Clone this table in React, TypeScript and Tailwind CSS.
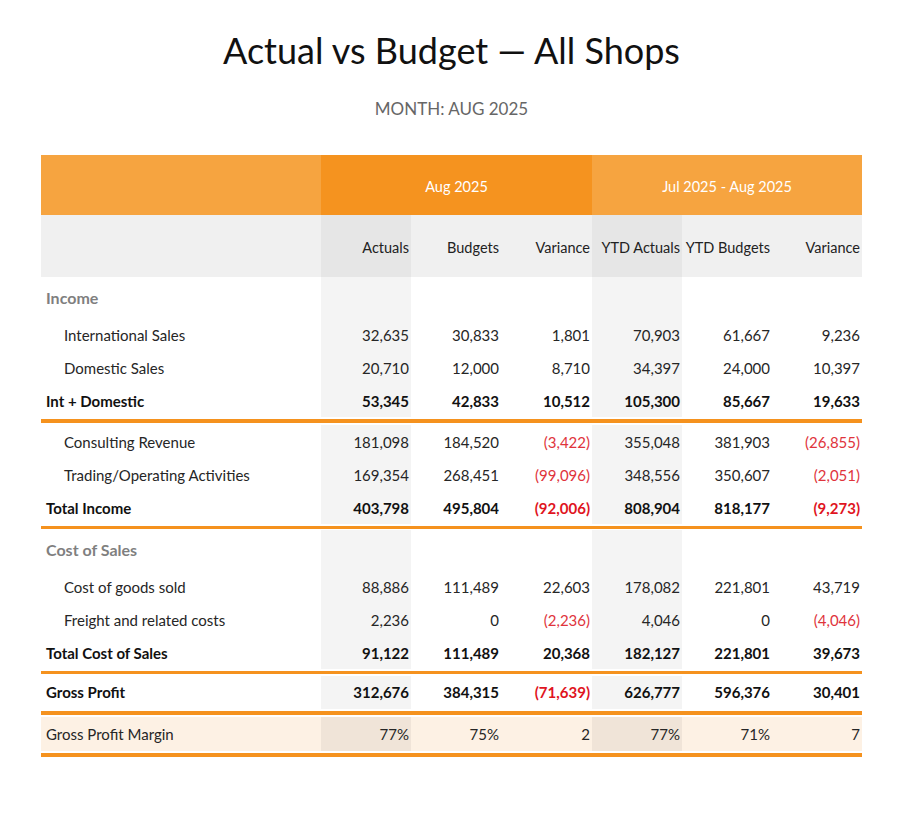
import React from 'react';

type Row = {
  label: string;
  values: string[];
  kind: 'item' | 'total';
};

const widths = ['w-[90px]', 'w-[90px]', 'w-[91px]', 'w-[90px]', 'w-[90px]', 'w-[90px]'];
const shaded = [true, false, false, true, false, false];

const incomeA: Row[] = [
  { label: 'International Sales', values: ['32,635', '30,833', '1,801', '70,903', '61,667', '9,236'], kind: 'item' },
  { label: 'Domestic Sales', values: ['20,710', '12,000', '8,710', '34,397', '24,000', '10,397'], kind: 'item' },
  { label: 'Int + Domestic', values: ['53,345', '42,833', '10,512', '105,300', '85,667', '19,633'], kind: 'total' },
];

const incomeB: Row[] = [
  { label: 'Consulting Revenue', values: ['181,098', '184,520', '(3,422)', '355,048', '381,903', '(26,855)'], kind: 'item' },
  { label: 'Trading/Operating Activities', values: ['169,354', '268,451', '(99,096)', '348,556', '350,607', '(2,051)'], kind: 'item' },
  { label: 'Total Income', values: ['403,798', '495,804', '(92,006)', '808,904', '818,177', '(9,273)'], kind: 'total' },
];

const costs: Row[] = [
  { label: 'Cost of goods sold', values: ['88,886', '111,489', '22,603', '178,082', '221,801', '43,719'], kind: 'item' },
  { label: 'Freight and related costs', values: ['2,236', '0', '(2,236)', '4,046', '0', '(4,046)'], kind: 'item' },
  { label: 'Total Cost of Sales', values: ['91,122', '111,489', '20,368', '182,127', '221,801', '39,673'], kind: 'total' },
];

function numCls(v: string, bold: boolean) {
  const neg = v.startsWith('(');
  if (neg) return bold ? 'text-[#e0141e] font-bold' : 'text-[#e0343c]';
  return bold ? 'text-[#111] font-bold' : 'text-[#262626]';
}

function DataRow({ row }: { row: Row }) {
  const bold = row.kind === 'total';
  return (
    <div className="flex h-[33px] items-stretch">
      <div
        className={
          'w-[280px] flex items-center pt-[1px] ' +
          (bold ? 'pl-[5px] font-bold text-[#111]' : 'pl-[23px] text-[#262626]')
        }
      >
        {row.label}
      </div>
      {row.values.map((v, i) => (
        <div
          key={i}
          className={
            widths[i] +
            ' flex items-center justify-end pr-[2px] pt-[1px] ' +
            (shaded[i] ? 'bg-[#f4f4f4] ' : '') +
            numCls(v, bold)
          }
        >
          {v}
        </div>
      ))}
    </div>
  );
}

function SectionHead({ label, h }: { label: string; h: string }) {
  return (
    <div className={'flex items-stretch ' + h}>
      <div className="w-[280px] flex items-center pl-[5px] font-bold text-[#7f7f7f] text-[16px]">{label}</div>
      {widths.map((w, i) => (
        <div key={i} className={w + (shaded[i] ? ' bg-[#f4f4f4]' : '')} />
      ))}
    </div>
  );
}

function Divider({ h, line }: { h: string; line: string }) {
  return (
    <div className={'flex flex-col justify-center ' + h}>
      <div className={'bg-[#f5921e] ' + line} />
    </div>
  );
}

export default function App() {
  return (
    <div
      className="w-[903px] h-[827px] bg-white text-[15px]"
      style={{ fontFamily: 'Lato, "Open Sans", sans-serif' }}
    >
      <div className="pt-[26px] text-center">
        <h1 className="text-[36px] leading-[48px] text-[#111]">Actual vs Budget — All Shops</h1>
        <p className="mt-[23px] text-[17px] leading-[24px] text-[#666]">MONTH: AUG 2025</p>
      </div>

      <div className="ml-[41px] mt-[34px] w-[821px]">
        {/* Group header */}
        <div className="flex h-[60px] text-white text-[14.5px]">
          <div className="w-[280px] bg-[#f6a440]" />
          <div className="w-[271px] bg-[#f5931f] flex items-center justify-center pt-[3px]">Aug 2025</div>
          <div className="w-[270px] bg-[#f6a440] flex items-center justify-center pt-[3px]">Jul 2025 - Aug 2025</div>
        </div>

        {/* Column header */}
        <div className="flex h-[62px] bg-[#f0f0f0] text-[#222] text-[14.5px]">
          <div className="w-[280px]" />
          {['Actuals', 'Budgets', 'Variance', 'YTD Actuals', 'YTD Budgets', 'Variance'].map((t, i) => (
            <div
              key={i}
              className={
                widths[i] +
                ' flex items-center justify-end pr-[2px] pt-[3px] whitespace-nowrap ' +
                (shaded[i] ? 'bg-[#e6e6e6]' : '')
              }
            >
              {t}
            </div>
          ))}
        </div>

        <SectionHead label="Income" h="h-[41px]" />
        {incomeA.map((r) => (
          <DataRow key={r.label} row={r} />
        ))}
        <Divider h="h-[8px]" line="h-[4px]" />
        {incomeB.map((r) => (
          <DataRow key={r.label} row={r} />
        ))}
        <Divider h="h-[6px]" line="h-[3px]" />

        <SectionHead label="Cost of Sales" h="h-[40px]" />
        {costs.map((r) => (
          <DataRow key={r.label} row={r} />
        ))}
        <Divider h="h-[7px]" line="h-[3px]" />

        {/* Gross profit */}
        <div className="flex h-[33px] items-stretch font-bold text-[#111]">
          <div className="w-[280px] flex items-center pl-[5px]">Gross Profit</div>
          {['312,676', '384,315', '(71,639)', '626,777', '596,376', '30,401'].map((v, i) => (
            <div
              key={i}
              className={
                widths[i] +
                ' flex items-center justify-end pr-[2px] ' +
                (shaded[i] ? 'bg-[#f4f4f4] ' : '') +
                numCls(v, true)
              }
            >
              {v}
            </div>
          ))}
        </div>
        <Divider h="h-[8px]" line="h-[4px]" />

        {/* Margin */}
        <div className="flex h-[34px] items-stretch bg-[#fdf1e4] text-[#262626]">
          <div className="w-[280px] flex items-center pl-[5px]">Gross Profit Margin</div>
          {['77%', '75%', '2', '77%', '71%', '7'].map((v, i) => (
            <div
              key={i}
              className={
                widths[i] + ' flex items-center justify-end pr-[2px] ' + (shaded[i] ? 'bg-[#f0e4d8]' : '')
              }
            >
              {v}
            </div>
          ))}
        </div>
        <Divider h="h-[8px]" line="h-[4px]" />
      </div>
    </div>
  );
}
